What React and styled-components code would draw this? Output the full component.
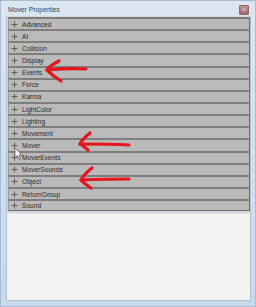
import React from 'react'
import styled, { createGlobalStyle } from 'styled-components'

const Global = createGlobalStyle`
  html, body { margin: 0; padding: 0; background: #c8d9ea; }
  * { box-sizing: border-box; }
`

const groups = [
  'Advanced', 'AI', 'Collision', 'Display', 'Events', 'Force', 'Karma',
  'LightColor', 'Lighting', 'Movement', 'Mover', 'MoverEvents',
  'MoverSounds', 'Object', 'ReturnGroup', 'Sound',
]

const PlusIcon = () => (
  <svg width="7" height="7" viewBox="0 0 7 7">
    <path d="M3.5 0.5 V6.5 M0.5 3.5 H6.5" stroke="#555" strokeWidth="0.9" />
  </svg>
)

const App = () => {
  return (
    <Window>
      <Global />
      <TitleBar>
        <Title>Mover Properties</Title>
        <CloseBtn>×</CloseBtn>
      </TitleBar>
      <Body>
        <List>
          {groups.map((g) => (
            <Row key={g}>
              <Plus><PlusIcon /></Plus>
              <Label>{g}</Label>
            </Row>
          ))}
        </List>
        <Empty />
      </Body>
      <Overlay width="256" height="307" viewBox="0 0 256 307">
        <g fill="none" stroke="#e4161b" strokeWidth="3.2" strokeLinecap="round" strokeLinejoin="round">
          <path d="M86 69 C72 68 58 69 47 70" />
          <path d="M59 61 C53 64 49 67 47 70 C51 74 56 78 61 81" />
          <path d="M129 145 C112 144 96 144 80 144" />
          <path d="M90 133 C85 137 82 140 80 144 C83 146 86 148 88 150" />
          <path d="M129 179 C112 179 96 179 81 180" />
          <path d="M92 168 C87 172 83 176 81 180 C84 183 88 186 91 188" />
        </g>
        <path d="M15 148 L15 158 L17.5 155.5 L19 159.5 L20.5 159 L19 155 L22 155 Z" fill="#f4f4f4" stroke="#555" strokeWidth="0.7" strokeLinejoin="round" />
      </Overlay>
    </Window>
  )
}

export default App

const Window = styled.div`
  position: relative;
  width: 256px;
  height: 307px;
  display: flex;
  flex-direction: column;
  padding: 0 4px 5px 5px;
  background: linear-gradient(#dbe6f1, #c7d9ec);
  border: 1px solid #a7bcd3;
  font-family: "Liberation Sans", Arial, sans-serif;
`

const TitleBar = styled.div`
  height: 15px;
  display: flex;
  align-items: center;
  justify-content: space-between;
  padding: 1px 2px 0 2px;
`

const Title = styled.span`
  font-size: 6.8px;
  color: #39414c;
`

const CloseBtn = styled.span`
  width: 10px;
  height: 10px;
  margin-top: 1px;
  display: flex;
  align-items: center;
  justify-content: center;
  font-size: 8px;
  line-height: 1;
  color: #ecd0cf;
  background: linear-gradient(#c39292, #a46666);
  border: 1px solid #8d6a6a;
  border-radius: 1px;
`

const Body = styled.div`
  flex: 1;
  display: flex;
  flex-direction: column;
  background: #f2f2f2;
  border: 1px solid #b3c1cf;
  border-top: none;
`

const List = styled.div`
  display: flex;
  flex-direction: column;
  padding: 1px 0 2px 1px;
  background: #d3d6da;
  border-bottom: 1px solid #e6e6e6;
`

const Row = styled.div`
  height: 12.15px;
  display: flex;
  align-items: center;
  background: #bababa;
  border-top: 2px solid #7e7e7e;
  border-left: 1px solid #9a9a9a;
  border-right: 1px solid #6f6f6f;
  &:last-child { border-bottom: 1px solid #6f6f6f; }
`

const Plus = styled.span`
  width: 7px;
  height: 7px;
  margin-left: 2px;
  display: flex;
`

const Label = styled.span`
  margin-left: 4px;
  font-size: 6.6px;
  color: #2a2a2a;
`

const Empty = styled.div`
  flex: 1;
  background: #f2f2f2;
`

const Overlay = styled.svg`
  position: absolute;
  left: -1px;
  top: -1px;
  pointer-events: none;
`
